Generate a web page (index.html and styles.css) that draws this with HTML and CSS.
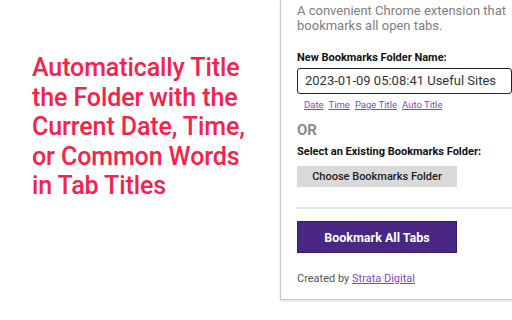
FILE: index.html
```html
<!DOCTYPE html>
<html>
<head>
<meta charset="utf-8">
<link rel="stylesheet" href="styles.css">
</head>
<body>
<div class="page">
  <div class="promo">
    <h1 class="headline">Automatically Title the Folder with the Current Date, Time, or Common Words in Tab Titles</h1>
  </div>
  <div class="panel">
    <p class="intro">A convenient Chrome extension that bookmarks all open tabs.</p>
    <label class="label label-first">New Bookmarks Folder Name:</label>
    <div class="input">2023-01-09 05:08:41 Useful Sites</div>
    <div class="links">
      <a href="#">Date</a><a href="#">Time</a><a href="#">Page Title</a><a href="#">Auto Title</a>
    </div>
    <div class="or">OR</div>
    <label class="label">Select an Existing Bookmarks Folder:</label>
    <button class="btn-choose">Choose Bookmarks Folder</button>
    <hr class="sep">
    <button class="btn-main">Bookmark All Tabs</button>
    <p class="credit">Created by <a href="#">Strata Digital</a></p>
  </div>
</div>
</body>
</html>
```
FILE: styles.css
```css
html, body {
  margin: 0;
  padding: 0;
  background: #ffffff;
  width: 512px;
  height: 320px;
  overflow: hidden;
}
.page {
  display: flex;
  width: 512px;
  height: 320px;
}
.promo {
  width: 280px;
  flex: none;
  padding: 53px 0 0 32px;
  box-sizing: border-box;
}
.headline {
  margin: 0;
  width: 225px;
  font-family: Roboto, "Liberation Sans", sans-serif;
  font-weight: 500;
  font-size: 25px;
  line-height: 29.5px;
  color: #f5224b;
  letter-spacing: -0.1px;
}
.panel {
  flex: none;
  width: 250px;
  height: 300px;
  box-sizing: border-box;
  padding: 3px 0 0 16px;
  background: #fff;
  border-left: 1px solid #c9c9c9;
  border-bottom: 1px solid #c9c9c9;
  box-shadow: 0 1px 2px rgba(0,0,0,0.15);
  font-family: Roboto, "Liberation Sans", sans-serif;
}
.intro {
  margin: 0;
  font-size: 13px;
  line-height: 15px;
  color: #808080;
  width: 215px;
}
.label {
  display: block;
  font-size: 11px;
  font-weight: 700;
  color: #111;
  line-height: 13px;
}
.label-first {
  margin-top: 18px;
}
.input {
  margin-top: 4px;
  width: 215px;
  height: 26px;
  box-sizing: border-box;
  border: 1px solid #222;
  border-radius: 3px;
  padding: 0 0 0 7px;
  font-size: 13px;
  line-height: 24px;
  color: #333;
}
.links {
  display: flex;
  gap: 5px;
  margin-top: 5px;
  padding-left: 7px;
  font-size: 9.5px;
  line-height: 12px;
}
.links a, .credit a {
  color: #7a4cc0;
  text-decoration: underline;
}
.or {
  margin-top: 10px;
  font-size: 15px;
  font-weight: 700;
  color: #8a8a8a;
  line-height: 18px;
}
.or + .label {
  margin-top: 6px;
}
.btn-choose {
  display: block;
  margin-top: 8px;
  width: 160px;
  height: 21px;
  border: none;
  background: #d9d9d9;
  font-family: Roboto, "Liberation Sans", sans-serif;
  font-size: 11px;
  font-weight: 500;
  color: #222;
  padding: 0;
}
.sep {
  margin: 20px 0 0 0;
  border: none;
  height: 2px;
  background: #e6e6e6;
}
.btn-main {
  display: block;
  margin-top: 12px;
  width: 160px;
  height: 32px;
  border: 1px solid #3b1a6e;
  background: #4b2784;
  color: #fff;
  font-family: Roboto, "Liberation Sans", sans-serif;
  font-size: 12.5px;
  font-weight: 700;
  padding: 0;
}
.credit {
  margin: 19px 0 0 0;
  font-size: 11px;
  line-height: 13px;
  color: #555;
}
```
